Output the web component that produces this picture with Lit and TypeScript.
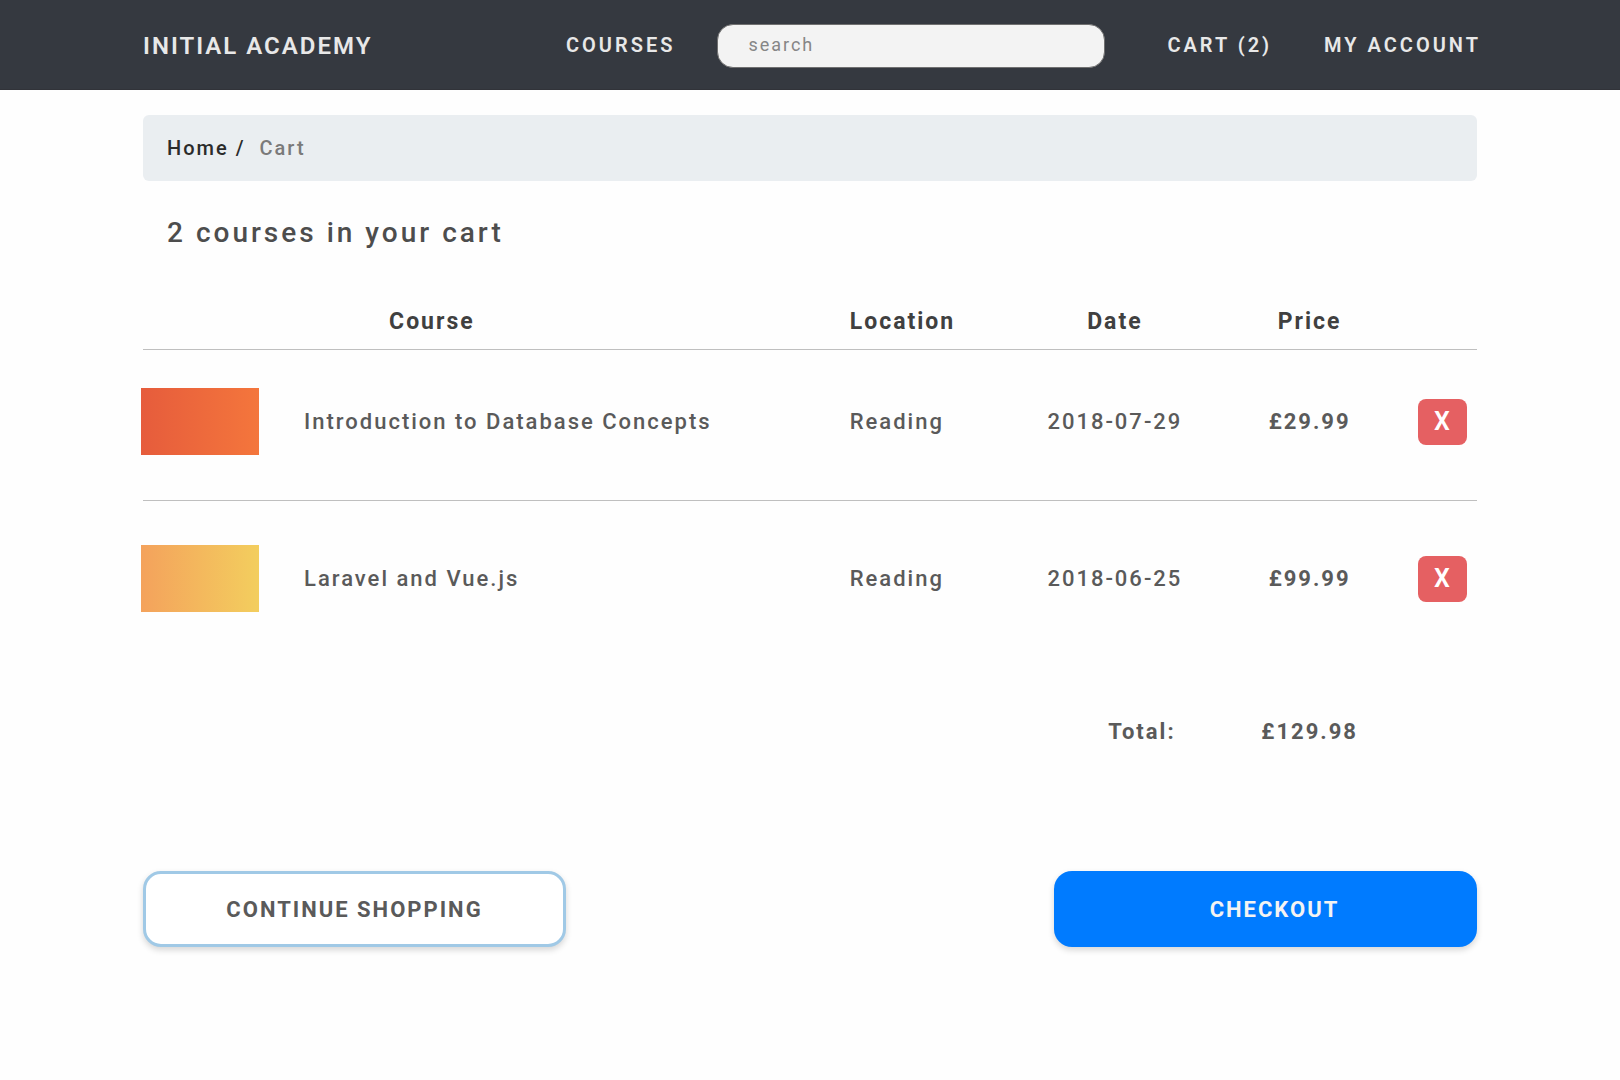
import { LitElement, html, css } from "lit";
import { customElement, state } from "lit/decorators.js";

interface Course {
  id: number;
  title: string;
  location: string;
  date: string;
  pence: number;
  theme: string;
}

const formatPrice = (pence: number) => `£${(pence / 100).toFixed(2)}`;

@customElement("site-header")
export class SiteHeader extends LitElement {
  static properties = { count: { type: Number } };

  declare count: number;

  static styles = css`
    :host {
      display: block;
    }
    .bar {
      box-sizing: border-box;
      display: flex;
      align-items: center;
      min-height: 90px;
      padding: 2px 139px 0 143px;
      background: #353940;
      border-bottom: 1px solid #313339;
    }
    a {
      color: #e8e8e8;
      text-decoration: none;
      white-space: nowrap;
      font-weight: 600;
    }
    .brand {
      margin-right: auto;
      font-size: 24px;
      letter-spacing: 2px;
    }
    .link {
      font-size: 20px;
      line-height: 24px;
      padding-bottom: 2px;
      letter-spacing: 3px;
    }
    .search {
      flex: 0 1 388px;
      min-width: 120px;
      margin: 0 62px 0 42px;
    }
    .field {
      box-sizing: border-box;
      width: 100%;
      height: 44px;
      padding: 0 30px 2px;
      border: 1px solid #707070;
      border-radius: 16px;
      background: #f3f3f3;
      color: #444;
      font-family: inherit;
      font-size: 18px;
      letter-spacing: 2px;
      display: block;
    }
    .field::placeholder {
      color: #868686;
      opacity: 1;
    }
    .account {
      margin-left: 52px;
    }
  `;

  render() {
    return html`
      <header class="bar">
        <a class="brand" href="#home">INITIAL ACADEMY</a>
        <a class="link" href="#courses">COURSES</a>
        <form class="search" role="search" @submit=${(e: Event) => e.preventDefault()}>
          <input class="field" type="search" placeholder="search" aria-label="Search courses" />
        </form>
        <a class="link" href="#cart">CART (${this.count})</a>
        <a class="link account" href="#account">MY ACCOUNT</a>
      </header>
    `;
  }
}

@customElement("app-root")
export class AppRoot extends LitElement {
  @state() private courses: Course[] = [
    { id: 1, title: "Introduction to Database Concepts", location: "Reading", date: "2018-07-29", pence: 2999, theme: "database" },
    { id: 2, title: "Laravel and Vue.js", location: "Reading", date: "2018-06-25", pence: 9999, theme: "laravel" },
  ];

  static styles = css`
    :host {
      display: block;
      min-height: 100vh;
      background: #fefefe;
      color: #5a5a5a;
      font-family: Roboto, "Liberation Sans", sans-serif;
      font-size: 22px;
      letter-spacing: 2px;
    }
    .page {
      padding: 25px 143px 40px;
    }
    .crumbs {
      display: flex;
      align-items: center;
      gap: 7px;
      padding: 21px 24px;
      border-radius: 6px;
      background: #eaeef1;
      color: #2b2b2b;
      font-size: 20px;
      line-height: 24px;
      font-weight: 500;
    }
    .crumbs a {
      color: inherit;
      text-decoration: none;
    }
    .current {
      margin-left: 7px;
      color: #7a7a7a;
    }
    .heading {
      margin: 34px 24px 0;
      color: #4d4d4d;
      font-size: 28px;
      line-height: 36px;
      font-weight: 500;
      letter-spacing: 3px;
    }
    .cart {
      width: 100%;
      margin-top: 48px;
      border-collapse: collapse;
      table-layout: fixed;
    }
    .col-location {
      width: 15.5%;
    }
    .col-date,
    .col-price {
      width: 14.6%;
    }
    .col-remove {
      width: 70px;
    }
    th,
    td {
      padding: 0;
      text-align: center;
      font-weight: 500;
    }
    .cart thead th {
      padding: 9px 0 13px;
      border-bottom: 1px solid #bfbfbf;
      color: #404040;
      font-size: 23px;
      line-height: 28px;
      font-weight: 700;
    }
    .cart thead .head-course {
      padding-right: 90px;
    }
    .cart thead .head-location,
    .location {
      padding-left: 39px;
      text-align: left;
    }
    .line td,
    .line th {
      padding-top: 44px;
      padding-bottom: 44px;
    }
    .line:first-child td,
    .line:first-child th {
      padding-top: 38px;
      padding-bottom: 45px;
      border-bottom: 1px solid #bfbfbf;
    }
    .item {
      display: flex;
      align-items: center;
      gap: 45px;
      margin-left: -2px;
      text-align: left;
    }
    .thumb {
      flex: none;
      width: 118px;
      height: 67px;
    }
    .database {
      background: linear-gradient(to right, #e65c3c, #f4763c);
    }
    .laravel {
      background: linear-gradient(to right, #f4a25c, #f3ce5e);
    }
    .cart .price {
      font-weight: 700;
    }
    .remove {
      width: 49px;
      height: 46px;
      padding: 0;
      border: 0;
      border-radius: 8px;
      background: #e56062;
      color: #fff;
      font: 600 25px Roboto, "Liberation Sans", sans-serif;
      cursor: pointer;
      vertical-align: middle;
    }
    .total td,
    .total th {
      padding-top: 62px;
      padding-bottom: 62px;
      line-height: 28px;
      font-weight: 700;
    }
    .total .total-label {
      padding-left: 54px;
    }
    .actions {
      display: flex;
      flex-wrap: wrap;
      justify-content: space-between;
      gap: 24px;
      margin-top: 63px;
    }
    .action {
      box-sizing: border-box;
      flex: 0 1 423px;
      min-height: 76px;
      border: 0;
      border-radius: 18px;
      box-shadow: 0 3px 6px rgba(0, 0, 0, 0.16);
      font: 700 22px Roboto, "Liberation Sans", sans-serif;
      letter-spacing: 2px;
      cursor: pointer;
    }
    .continue {
      border: 3px solid #a0c9e6;
      background: #fff;
      color: #5a5a5a;
    }
    .checkout {
      padding-left: 24px;
      background: #007bff;
      color: #f3f3f3;
    }
  `;

  private remove(id: number) {
    this.courses = this.courses.filter((course) => course.id !== id);
  }

  render() {
    const total = this.courses.reduce((sum, course) => sum + course.pence, 0);
    return html`
      <site-header .count=${this.courses.length}></site-header>
      <main class="page">
        <nav class="crumbs" aria-label="Breadcrumb">
          <a href="#home">Home</a><span>/</span><span class="current" aria-current="page">Cart</span>
        </nav>
        <h1 class="heading">${this.courses.length} courses in your cart</h1>
        <table class="cart">
          <colgroup>
            <col />
            <col class="col-location" />
            <col class="col-date" />
            <col class="col-price" />
            <col class="col-remove" />
          </colgroup>
          <thead>
            <tr>
              <th class="head-course" scope="col">Course</th>
              <th class="head-location" scope="col">Location</th>
              <th scope="col">Date</th>
              <th scope="col">Price</th>
              <th></th>
            </tr>
          </thead>
          <tbody>
            ${this.courses.map(
              (course) => html`
                <tr class="line">
                  <th scope="row">
                    <div class="item"><span class="thumb ${course.theme}"></span><span>${course.title}</span></div>
                  </th>
                  <td class="location">${course.location}</td>
                  <td>${course.date}</td>
                  <td class="price">${formatPrice(course.pence)}</td>
                  <td>
                    <button class="remove" type="button" aria-label="Remove ${course.title}" @click=${() => this.remove(course.id)}>X</button>
                  </td>
                </tr>
              `
            )}
          </tbody>
          <tfoot>
            <tr class="total">
              <td colspan="2"></td>
              <th class="total-label" scope="row">Total:</th>
              <td>${formatPrice(total)}</td>
              <td></td>
            </tr>
          </tfoot>
        </table>
        <div class="actions">
          <button class="action continue" type="button">CONTINUE SHOPPING</button>
          <button class="action checkout" type="button">CHECKOUT</button>
        </div>
      </main>
    `;
  }
}
